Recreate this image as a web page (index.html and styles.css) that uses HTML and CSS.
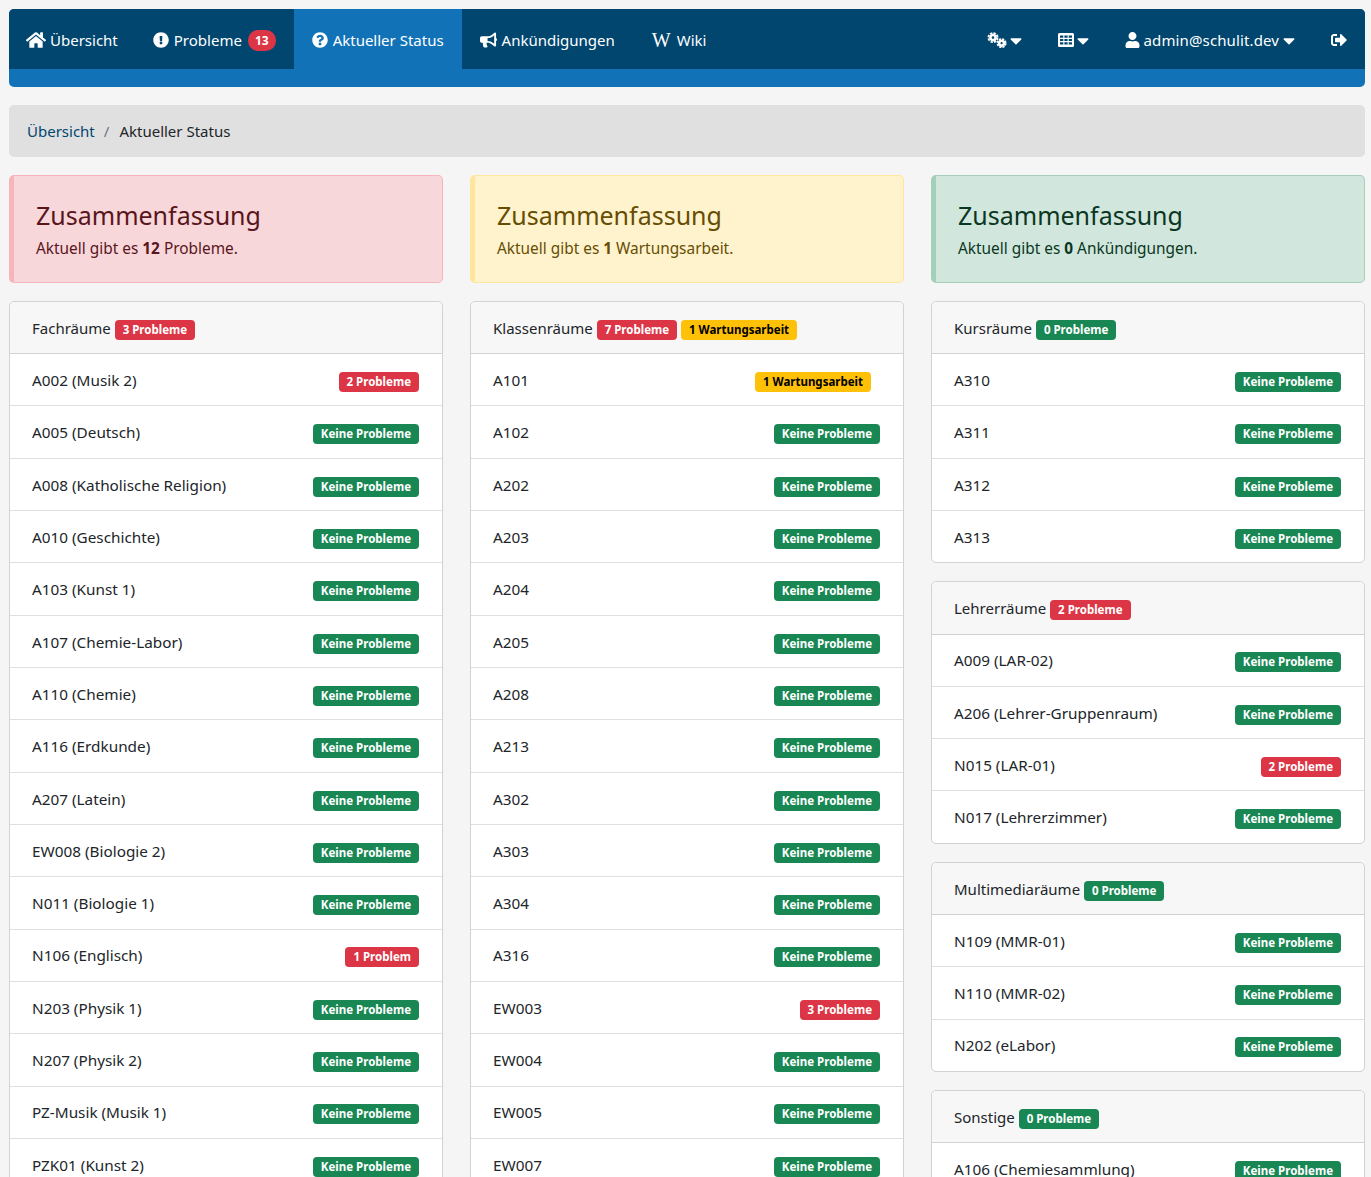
FILE: index.html
```html
<!DOCTYPE html>
<html lang="de">
<head>
<meta charset="UTF-8">
<title>Aktueller Status</title>
<link rel="stylesheet" href="styles.css">
</head>
<body>
<nav class="topNav">
  <div class="navRow">
    <a class="navItem navHome"><svg class="icon iconHome" viewBox="0 0 576 512"><path d="M280.37 148.26L96 300.11V464a16 16 0 0 0 16 16l112.06-.29a16 16 0 0 0 15.92-16V368a16 16 0 0 1 16-16h64a16 16 0 0 1 16 16v95.64a16 16 0 0 0 16 16.05L464 480a16 16 0 0 0 16-16V300L295.67 148.26a12.19 12.19 0 0 0-15.3 0zM571.6 251.47L488 182.56V44.05a12 12 0 0 0-12-12h-56a12 12 0 0 0-12 12v72.61L318.47 43a48 48 0 0 0-61 0L4.34 251.47a12 12 0 0 0-1.6 16.9l25.5 31A12 12 0 0 0 45.15 301l235.22-193.74a12.19 12.19 0 0 1 15.3 0L530.9 301a12 12 0 0 0 16.9-1.6l25.5-31a12 12 0 0 0-1.7-16.93z"/></svg>Übersicht</a>
    <a class="navItem"><svg class="icon" viewBox="0 0 512 512"><path d="M504 256c0 136.997-111.043 248-248 248S8 392.997 8 256C8 119.083 119.043 8 256 8s248 111.083 248 248zm-248 50c-25.405 0-46 20.595-46 46s20.595 46 46 46 46-20.595 46-46-20.595-46-46-46zm-43.673-165.346l7.418 136c.347 6.364 5.609 11.346 11.982 11.346h48.546c6.373 0 11.635-4.982 11.982-11.346l7.418-136c.375-6.874-5.098-12.654-11.982-12.654h-63.383c-6.884 0-12.356 5.78-11.981 12.654z"/></svg>Probleme <span class="pill">13</span></a>
    <a class="navItem active"><svg class="icon" viewBox="0 0 512 512"><path d="M504 256c0 136.997-111.043 248-248 248S8 392.997 8 256C8 119.083 119.043 8 256 8s248 111.083 248 248zM262.655 90c-54.497 0-89.255 22.957-116.549 63.758-3.536 5.286-2.353 12.415 2.715 16.258l34.699 26.31c5.205 3.947 12.621 3.008 16.665-2.122 17.864-22.658 30.113-35.797 57.303-35.797 20.429 0 45.698 13.148 45.698 32.958 0 14.976-12.363 22.667-32.534 33.976C247.128 238.528 216 254.941 216 296v4c0 6.627 5.373 12 12 12h56c6.627 0 12-5.373 12-12v-1.333c0-28.462 83.186-29.647 83.186-106.667 0-58.002-60.165-102-116.531-102zM256 338c-25.365 0-46 20.635-46 46 0 25.364 20.635 46 46 46s46-20.636 46-46c0-25.365-20.635-46-46-46z"/></svg>Aktueller Status</a>
    <a class="navItem navNews"><svg class="icon iconHorn" viewBox="0 0 576 512"><path d="M576 240c0-23.63-12.95-44.04-32-55.12V32.01C544 23.26 537.02 0 512 0c-7.12 0-14.19 2.38-19.98 7.02l-85.03 68.03C364.28 109.19 310.66 128 256 128H64c-35.35 0-64 28.65-64 64v96c0 35.35 28.65 64 64 64h33.7c-1.39 10.48-2.18 21.14-2.18 32 0 39.77 9.26 77.35 25.56 110.94 5.19 10.69 16.52 17.06 28.4 17.06h74.28c26.05 0 41.69-29.84 25.9-50.56-16.4-21.52-26.15-48.36-26.15-77.44 0-11.11 1.62-21.79 4.41-32H256c54.66 0 108.28 18.81 150.98 52.95l85.03 68.03a32.023 32.023 0 0 0 19.98 7.02c24.92 0 32-22.78 32-32V295.13C563.05 284.04 576 263.63 576 240zm-96 141.42l-33.05-26.44C392.95 311.78 325.12 288 256 288v-96c69.12 0 136.95-23.78 190.95-66.98L480 98.58v282.84z"/></svg>Ankündigungen</a>
    <a class="navItem"><span class="wikiW">W</span>Wiki</a>
    <div class="navRight">
      <a class="navItem tight"><svg class="icon iconCogs" viewBox="0 0 20 16"><g fill="none" stroke="#fff"><circle cx="6" cy="5.6" r="2.6" stroke-width="2.6"/><circle cx="6" cy="5.6" r="4.6" stroke-width="1.8" stroke-dasharray="2.4 1.2"/><circle cx="14.6" cy="11.2" r="2.4" stroke-width="2.6"/><circle cx="14.6" cy="11.2" r="4.2" stroke-width="1.6" stroke-dasharray="2.2 1.1"/></g></svg><svg class="caret" viewBox="0 0 320 512"><path d="M31.3 192h257.3c17.8 0 26.7 21.5 14.1 34.1L174.1 354.8c-7.8 7.8-20.5 7.8-28.3 0L17.2 226.1C4.6 213.5 13.5 192 31.3 192z"/></svg></a>
      <a class="navItem tight"><svg class="icon" viewBox="0 0 16 14"><path fill-rule="evenodd" d="M1.5 0h13A1.5 1.5 0 0 1 16 1.5v11a1.5 1.5 0 0 1-1.5 1.5h-13A1.5 1.5 0 0 1 0 12.5v-11A1.5 1.5 0 0 1 1.5 0zM2 2.5v2.3h3.3V2.5zm4.4 0v2.3h3.2V2.5zm4.3 0v2.3H14V2.5zM2 5.9v2.2h3.3V5.9zm4.4 0v2.2h3.2V5.9zm4.3 0v2.2H14V5.9zM2 9.2v2.3h3.3V9.2zm4.4 0v2.3h3.2V9.2zm4.3 0v2.3H14V9.2z"/></svg><svg class="caret" viewBox="0 0 320 512"><path d="M31.3 192h257.3c17.8 0 26.7 21.5 14.1 34.1L174.1 354.8c-7.8 7.8-20.5 7.8-28.3 0L17.2 226.1C4.6 213.5 13.5 192 31.3 192z"/></svg></a>
      <a class="navItem navUser"><svg class="icon iconUser" viewBox="0 0 448 512"><path d="M224 256c70.7 0 128-57.3 128-128S294.7 0 224 0 96 57.3 96 128s57.3 128 128 128zm89.6 32h-16.7c-22.2 10.2-46.9 16-72.9 16s-50.6-5.8-72.9-16h-16.7C60.2 288 0 348.2 0 422.4V464c0 26.5 21.5 48 48 48h352c26.5 0 48-21.5 48-48v-41.6c0-74.2-60.2-134.4-134.4-134.4z"/></svg>admin@schulit.dev<svg class="caret" viewBox="0 0 320 512"><path d="M31.3 192h257.3c17.8 0 26.7 21.5 14.1 34.1L174.1 354.8c-7.8 7.8-20.5 7.8-28.3 0L17.2 226.1C4.6 213.5 13.5 192 31.3 192z"/></svg></a>
      <a class="navItem"><svg class="icon" viewBox="0 0 512 512"><path d="M497 273L329 441c-15 15-41 4.5-41-17v-96H152c-13.3 0-24-10.7-24-24v-96c0-13.3 10.7-24 24-24h136V88c0-21.4 25.9-32 41-17l168 168c9.3 9.4 9.3 24.6 0 34zM192 436v-40c0-6.6-5.4-12-12-12H96c-17.7 0-32-14.3-32-32V160c0-17.7 14.3-32 32-32h84c6.6 0 12-5.4 12-12V76c0-6.6-5.4-12-12-12H96c-53 0-96 43-96 96v192c0 53 43 96 96 96h84c6.6 0 12-5.4 12-12z"/></svg></a>
    </div>
  </div>
</nav>

<div class="breadcrumb"><a>Übersicht</a><span class="sep">/</span><span>Aktueller Status</span></div>

<div class="columns">
  <div class="column">
    <div class="alert alertRed">
      <h4>Zusammenfassung</h4>
      <p>Aktuell gibt es <strong>12</strong> Probleme.</p>
    </div>
    <div class="card">
      <div class="cardHead">Fachräume <span class="badge red">3 Probleme</span></div>
      <div class="row"><span>A002 (Musik 2)</span><span class="badge red">2 Probleme</span></div>
      <div class="row"><span>A005 (Deutsch)</span><span class="badge green">Keine Probleme</span></div>
      <div class="row"><span>A008 (Katholische Religion)</span><span class="badge green">Keine Probleme</span></div>
      <div class="row"><span>A010 (Geschichte)</span><span class="badge green">Keine Probleme</span></div>
      <div class="row"><span>A103 (Kunst 1)</span><span class="badge green">Keine Probleme</span></div>
      <div class="row"><span>A107 (Chemie-Labor)</span><span class="badge green">Keine Probleme</span></div>
      <div class="row"><span>A110 (Chemie)</span><span class="badge green">Keine Probleme</span></div>
      <div class="row"><span>A116 (Erdkunde)</span><span class="badge green">Keine Probleme</span></div>
      <div class="row"><span>A207 (Latein)</span><span class="badge green">Keine Probleme</span></div>
      <div class="row"><span>EW008 (Biologie 2)</span><span class="badge green">Keine Probleme</span></div>
      <div class="row"><span>N011 (Biologie 1)</span><span class="badge green">Keine Probleme</span></div>
      <div class="row"><span>N106 (Englisch)</span><span class="badge red">1 Problem</span></div>
      <div class="row"><span>N203 (Physik 1)</span><span class="badge green">Keine Probleme</span></div>
      <div class="row"><span>N207 (Physik 2)</span><span class="badge green">Keine Probleme</span></div>
      <div class="row"><span>PZ-Musik (Musik 1)</span><span class="badge green">Keine Probleme</span></div>
      <div class="row"><span>PZK01 (Kunst 2)</span><span class="badge green">Keine Probleme</span></div>
    </div>
  </div>

  <div class="column">
    <div class="alert alertYellow">
      <h4>Zusammenfassung</h4>
      <p>Aktuell gibt es <strong>1</strong> Wartungsarbeit.</p>
    </div>
    <div class="card">
      <div class="cardHead">Klassenräume <span class="badge red">7 Probleme</span> <span class="badge yellow">1 Wartungsarbeit</span></div>
      <div class="row"><span>A101</span><span class="badge yellow extraGap">1 Wartungsarbeit</span></div>
      <div class="row"><span>A102</span><span class="badge green">Keine Probleme</span></div>
      <div class="row"><span>A202</span><span class="badge green">Keine Probleme</span></div>
      <div class="row"><span>A203</span><span class="badge green">Keine Probleme</span></div>
      <div class="row"><span>A204</span><span class="badge green">Keine Probleme</span></div>
      <div class="row"><span>A205</span><span class="badge green">Keine Probleme</span></div>
      <div class="row"><span>A208</span><span class="badge green">Keine Probleme</span></div>
      <div class="row"><span>A213</span><span class="badge green">Keine Probleme</span></div>
      <div class="row"><span>A302</span><span class="badge green">Keine Probleme</span></div>
      <div class="row"><span>A303</span><span class="badge green">Keine Probleme</span></div>
      <div class="row"><span>A304</span><span class="badge green">Keine Probleme</span></div>
      <div class="row"><span>A316</span><span class="badge green">Keine Probleme</span></div>
      <div class="row"><span>EW003</span><span class="badge red">3 Probleme</span></div>
      <div class="row"><span>EW004</span><span class="badge green">Keine Probleme</span></div>
      <div class="row"><span>EW005</span><span class="badge green">Keine Probleme</span></div>
      <div class="row"><span>EW007</span><span class="badge green">Keine Probleme</span></div>
    </div>
  </div>

  <div class="column">
    <div class="alert alertGreen">
      <h4>Zusammenfassung</h4>
      <p>Aktuell gibt es <strong>0</strong> Ankündigungen.</p>
    </div>
    <div class="card">
      <div class="cardHead">Kursräume <span class="badge green">0 Probleme</span></div>
      <div class="row"><span>A310</span><span class="badge green">Keine Probleme</span></div>
      <div class="row"><span>A311</span><span class="badge green">Keine Probleme</span></div>
      <div class="row"><span>A312</span><span class="badge green">Keine Probleme</span></div>
      <div class="row"><span>A313</span><span class="badge green">Keine Probleme</span></div>
    </div>
    <div class="card">
      <div class="cardHead">Lehrerräume <span class="badge red">2 Probleme</span></div>
      <div class="row"><span>A009 (LAR-02)</span><span class="badge green">Keine Probleme</span></div>
      <div class="row"><span>A206 (Lehrer-Gruppenraum)</span><span class="badge green">Keine Probleme</span></div>
      <div class="row"><span>N015 (LAR-01)</span><span class="badge red">2 Probleme</span></div>
      <div class="row"><span>N017 (Lehrerzimmer)</span><span class="badge green">Keine Probleme</span></div>
    </div>
    <div class="card">
      <div class="cardHead">Multimediaräume <span class="badge green">0 Probleme</span></div>
      <div class="row"><span>N109 (MMR-01)</span><span class="badge green">Keine Probleme</span></div>
      <div class="row"><span>N110 (MMR-02)</span><span class="badge green">Keine Probleme</span></div>
      <div class="row"><span>N202 (eLabor)</span><span class="badge green">Keine Probleme</span></div>
    </div>
    <div class="card">
      <div class="cardHead">Sonstige <span class="badge green">0 Probleme</span></div>
      <div class="row"><span>A106 (Chemiesammlung)</span><span class="badge green">Keine Probleme</span></div>
    </div>
  </div>
</div>
</body>
</html>
```
FILE: styles.css
```css
html, body {
    height: 1177px;
    overflow: hidden;
}

body {
    margin: 0;
    padding: 9px 6px 0 9px;
    box-sizing: border-box;
    background-color: #f5f5f5;
    color: #212529;
    font-family: "Noto Sans", sans-serif;
    font-size: 15px;
    line-height: 24px;
}

/* top navigation */
.topNav {
    background-color: #1272b8;
    border-radius: 5px;
    padding-bottom: 18px;
    overflow: hidden;
}

.navRow {
    display: flex;
    height: 60px;
    background-color: #00466f;
}

.navRight {
    display: flex;
    margin-left: auto;
}

.navItem {
    display: flex;
    align-items: center;
    gap: 5px;
    padding: 2px 18px 0;
    color: #fff;
}

.navItem.tight {
    gap: 3px;
}

.navItem.active {
    background-color: #1272b8;
}

.navHome {
    padding-right: 17px;
}

.navNews {
    padding-right: 19px;
}

.navUser {
    letter-spacing: .12px;
}

.icon {
    width: 16px;
    height: 16px;
    fill: #fff;
}

.iconHome {
    width: 20px;
    height: 18px;
    margin: 0 -1px;
}

.iconHorn {
    width: 17px;
}

.iconCogs {
    width: 20px;
}

.iconUser {
    width: 15px;
    margin-right: -1px;
}

.caret {
    width: 12px;
    height: 19px;
    fill: #fff;
    margin-left: -1px;
}

.tight .caret {
    margin-left: 0;
}

.wikiW {
    font-family: "Liberation Serif", serif;
    font-size: 20px;
    margin-right: 1px;
}

.pill {
    margin-left: 1px;
    background-color: #dc3545;
    border-radius: 10px;
    padding: 0 7px;
    font-size: 12px;
    font-weight: 700;
    line-height: 21px;
}

/* breadcrumb */
.breadcrumb {
    margin-top: 18px;
    padding: 14px 18px;
    background-color: #e0e0e0;
    border-radius: 5px;
}

.breadcrumb a {
    color: #00466f;
}

.breadcrumb .sep {
    margin: 0 10px 0 9px;
    color: #6c757d;
}

/* three columns */
.columns {
    display: grid;
    grid-template-columns: repeat(3, 1fr);
    gap: 27px;
    margin-top: 18px;
}

.alert {
    padding: 19px 27px 0 22px;
    height: 108px;
    box-sizing: border-box;
    border: 1px solid;
    border-left-width: 5px;
    border-radius: 5px;
    margin-bottom: 18px;
}

.alert h4 {
    margin: 0;
    font-size: 25px;
    font-weight: 400;
    line-height: 40px;
}

.alert p {
    margin: 2px 0 0;
    font-size: 15.4px;
}

.alertRed {
    background-color: #f8d7da;
    border-color: #f5b5bb;
    color: #58151c;
}

.alertYellow {
    background-color: #fff3cd;
    border-color: #ffe69c;
    color: #664d03;
}

.alertGreen {
    background-color: #d1e7dd;
    border-color: #a3cfbb;
    color: #0a3622;
}

.card {
    background-color: #fff;
    border: 1px solid #d2d2d2;
    border-radius: 5px;
    margin-bottom: 18px;
}

.cardHead {
    padding: 14px 22px 13.15px;
    background-color: #f7f7f7;
    border-bottom: 1px solid #d2d2d2;
    border-radius: 5px 5px 0 0;
}

.row {
    display: flex;
    justify-content: space-between;
    align-items: center;
    padding: 14.2px 23px 13.8px 22px;
    height: 23.33px;
    border-bottom: 1px solid #dfdfdf;
    font-size: 15.3px;
}

.row:last-child {
    border-bottom: none;
}

.badge {
    display: inline-block;
    padding: 0 8px;
    border-radius: 4px;
    color: #fff;
    font-size: 11.5px;
    font-weight: 700;
    line-height: 20px;
}

.row .badge {
    margin-top: 4px;
}

.red {
    background-color: #dc3545;
}

.green {
    background-color: #198754;
}

.yellow {
    background-color: #ffc107;
    color: #000;
}

.extraGap {
    margin-right: 9px;
}
```
